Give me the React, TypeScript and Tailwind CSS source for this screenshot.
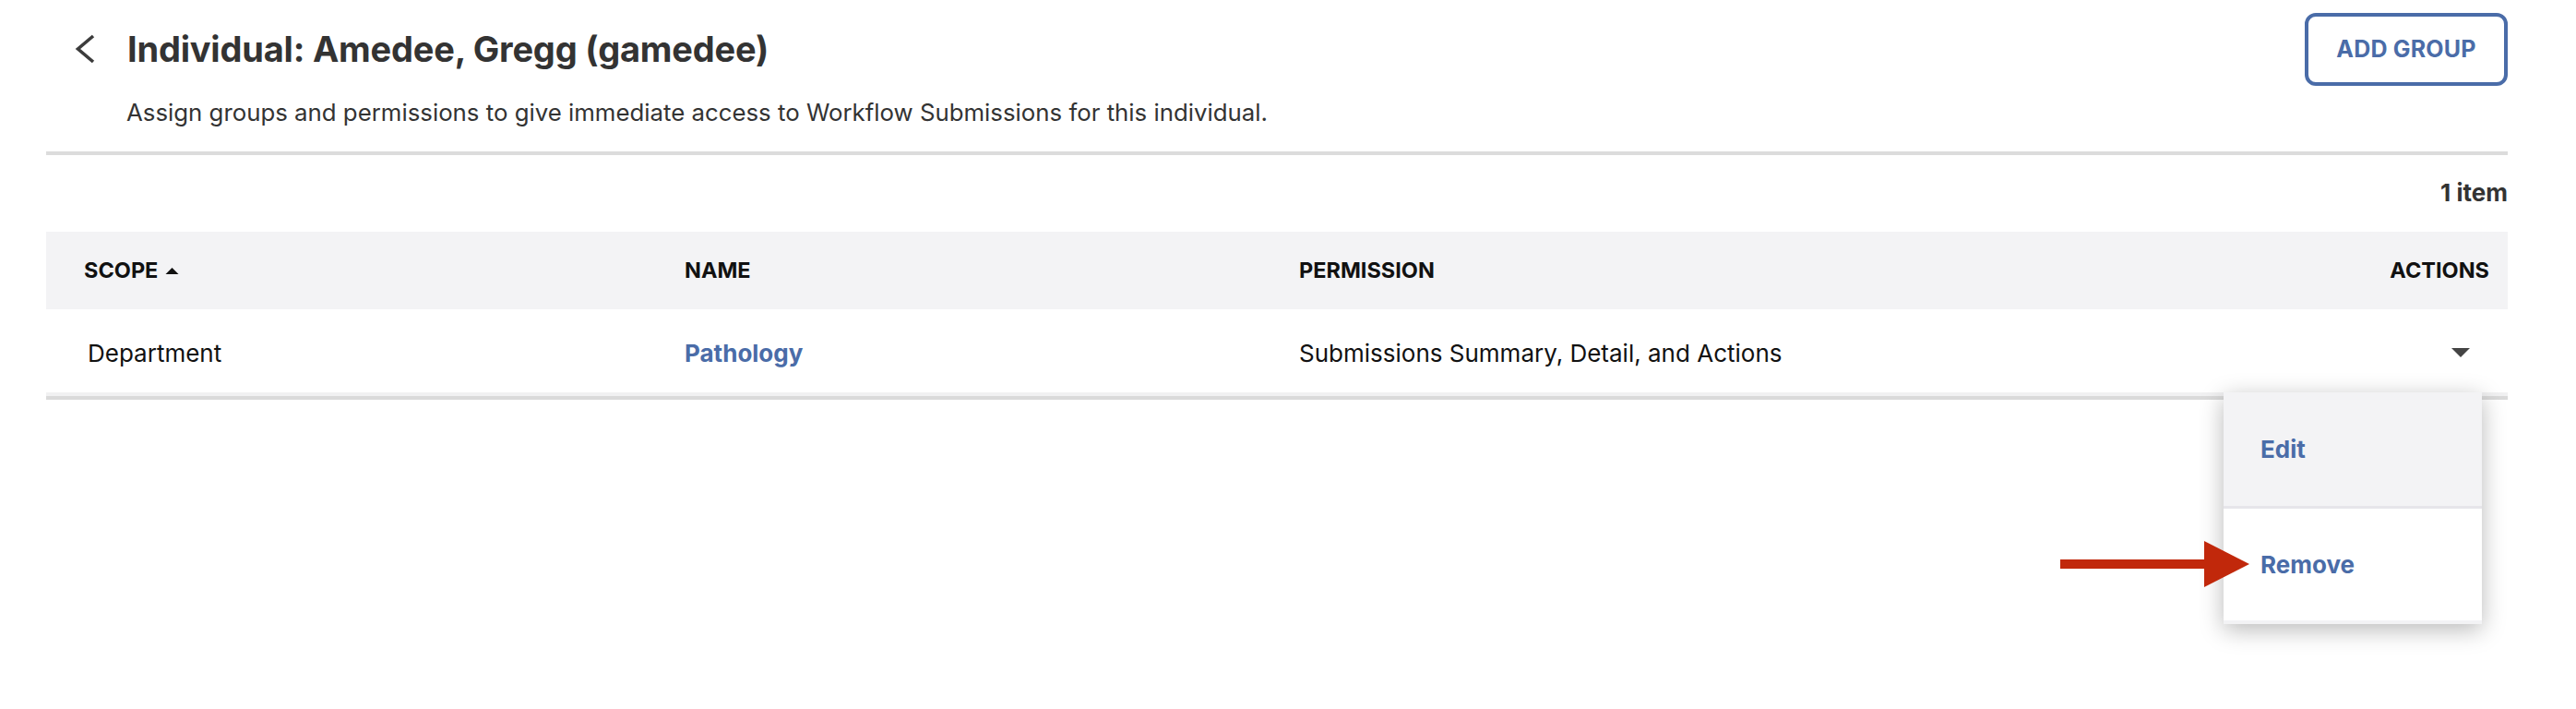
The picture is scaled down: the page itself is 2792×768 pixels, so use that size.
import React from 'react'

const blue = 'text-[#4a6ca8]'

const ChevronLeft: React.FC = () => (
  <svg width="22" height="32" viewBox="0 0 22 32" fill="none" className="shrink-0">
    <polyline points="20,2 3.5,16 20,30" stroke="#3c3c3c" strokeWidth="3.6" strokeLinejoin="miter" />
  </svg>
)

const Caret: React.FC<{ up?: boolean; className?: string }> = ({ up, className }) => (
  <svg width="20" height="10" viewBox="0 0 20 10" className={className}>
    {up ? <polygon points="0,10 10,0 20,10" fill="currentColor" /> : <polygon points="0,0 20,0 10,10" fill="currentColor" />}
  </svg>
)

const RedArrow: React.FC = () => (
  <svg width="205" height="50" viewBox="0 0 205 50" className="absolute left-[2233px] top-[586px] z-20">
    <rect x="0" y="20" width="160" height="10" fill="#c1280b" />
    <polygon points="156,0 205,25 156,50" fill="#c1280b" />
  </svg>
)

const App: React.FC = () => {
  return (
    <div className="relative min-h-[768px] w-[2792px] bg-white font-['Inter','Liberation_Sans',sans-serif] pl-[50px] pr-[74px]">
      {/* page header */}
      <div className="flex justify-between items-start pt-[14px]">
        <div className="flex flex-col pt-[16px]">
          <div className="flex items-center h-[46px]">
            <div className="ml-[31px] mr-[35px] flex items-center">
              <ChevronLeft />
            </div>
            <h1 className="text-[38px] leading-[46px] font-bold text-[#333] tracking-[-0.2px]">Individual: Amedee, Gregg (gamedee)</h1>
          </div>
          <p className="mt-[31px] pl-[87px] text-[25.8px] leading-[30px] text-[#333]">
            Assign groups and permissions to give immediate access to Workflow Submissions for this individual.
          </p>
        </div>
        <button type="button" className={`w-[220px] h-[79px] border-[4px] border-[#4a6ca8] rounded-[12px] text-[25px] font-bold ${blue} tracking-[0.2px]`}>
          ADD GROUP
        </button>
      </div>

      <div className="mt-[27px] h-[4px] bg-[#dcdcdc]"></div>

      <div className="mt-[26px] flex justify-end">
        <span className="text-[26px] leading-[30px] font-bold text-[#333]">1 item</span>
      </div>

      {/* table */}
      <div className="mt-[27px]">
        <div className="h-[84px] bg-[#f3f3f5] grid grid-cols-[651px_666px_1fr_auto] items-center pl-[41px] pr-[20px] text-[23.5px] font-bold text-[#111]">
          <div className="flex items-center gap-[8px]">
            SCOPE
            <Caret up className="w-[15px] h-[7px] text-[#111]" />
          </div>
          <div>NAME</div>
          <div>PERMISSION</div>
          <div className="text-right">ACTIONS</div>
        </div>

        <div className="relative">
          <div className="h-[98px] border-b-[4px] border-[#dadada] shadow-[inset_0_-4px_0_#f1f1f2] grid grid-cols-[651px_666px_1fr_auto] items-center pl-[41px] pr-[20px] text-[26px] text-[#111]">
            <div className="pl-[4px]">Department</div>
            <div className={`font-bold ${blue}`}>Pathology</div>
            <div>Submissions Summary, Detail, and Actions</div>
            <div className="flex justify-end pr-[21px]">
              <Caret className="text-[#444]" />
            </div>
          </div>

          {/* open actions menu */}
          <div className="absolute top-[90px] right-[28px] z-10 w-[280px] bg-white shadow-[0_6px_24px_rgba(0,0,0,0.28)] flex flex-col">
            <div className={`h-[123px] bg-[#f3f3f5] flex items-center pl-[40px] text-[26px] font-bold ${blue}`}>Edit</div>
            <div className="h-[3px] bg-[#e6e5ea]"></div>
            <div className={`h-[121px] bg-white flex items-center pl-[40px] text-[26px] font-bold ${blue}`}>Remove</div>
            <div className="h-[4px] bg-[#f3f3f5]"></div>
          </div>
        </div>
      </div>

      <RedArrow />
    </div>
  )
}

export default App
